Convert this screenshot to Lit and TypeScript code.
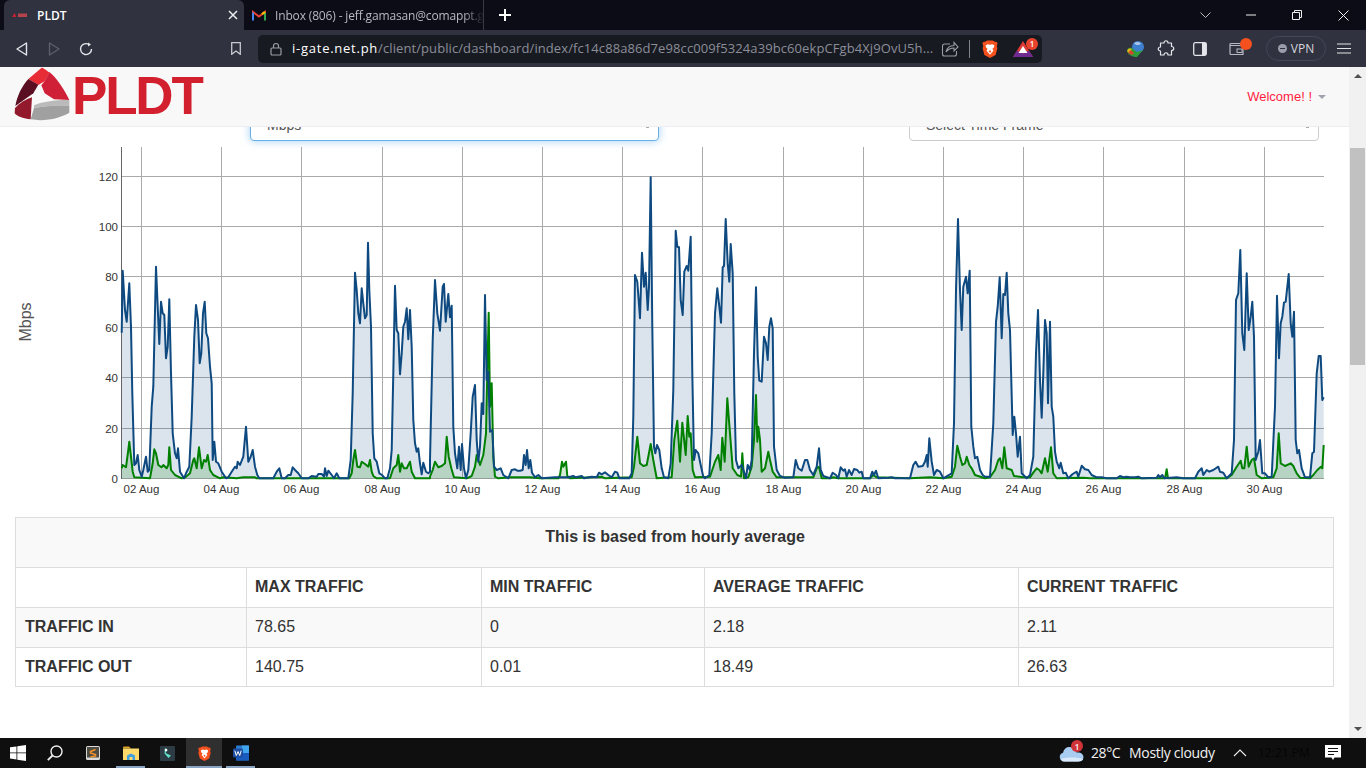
import { LitElement, html, css, svg } from "lit";
import { customElement } from "lit/decorators.js";

type Z = [number, number];
const conv = (ox: number, pts: number[]): Z[] => {
  const r: Z[] = [];
  for (let i = 0; i < pts.length; i += 2) r.push([ox + pts[i] / 3, 140 + pts[i + 1] / 3]);
  return r;
};
const blue: Z[] = [
  ...conv(100, [65,578,68,392,75,510,80,545,88,430,93,560,97,760,103,975,108,970,113,945,118,990,125,1010,130,990,138,950,143,995,148,990,155,800,160,740,168,380,173,500,178,612,183,485,188,520,193,525,198,655,203,620,208,478,213,700,218,880,225,940,230,955,234,925,240,995,246,1005,252,1015,258,1000,268,980,275,830,283,590,288,495,294,540,299,670,304,640,309,520,314,485,319,580,324,595,330,680,335,730,338,960,343,905,348,965,355,970,365,995,378,1015,385,1012,395,995,405,980,410,985,413,965,420,975,430,950,438,860,445,965,452,950,458,930,465,980,472,1005,478,1015,520,1015,530,995,538,985,545,1015,555,1015,565,1005,572,1005,578,982,585,990,595,1000,605,1015,625,1015,635,1008,650,1010,655,1002,665,1002,672,1010,675,985,680,1008,685,992,695,1005,702,1015,710,1000,718,1015,745,1015,752,960,758,760,765,398,770,450,775,520,780,550,785,445,790,490,795,535,800,525,804,308,808,450,813,560,818,880,823,955,830,965,838,1000,846,1005,855,1015,862,1015,870,985,875,930,880,700,885,437,890,570,895,580,900,703,905,640,910,560,915,545,920,505,925,598,930,510,935,620,940,840,945,910,950,935,955,925,960,970,965,1003,970,968,978,995,985,1000,990,995]),
  ...conv(430, [0,960,8,600,15,420,22,520,30,572,38,440,42,432,47,545,55,462,60,532,65,497,70,860,75,940,82,985,87,920,92,990,96,912,102,985,108,1015,115,990,122,880,128,770,135,735,140,900,145,965,150,920,155,790,160,822,165,465,170,720,175,695,180,875,187,870,192,980,200,990,212,985,220,1005,235,1015,245,990,255,988,262,992,270,992,278,990,282,945,287,975,291,930,296,985,301,960,306,998,315,1012,325,1005,335,1015,375,1012,415,1012,430,1008,437,1012,455,1008,462,1015,485,1010,500,1012,507,998,515,1003,525,997,535,1005,545,1012,555,995,562,998,568,1015,598,1015,605,1000,610,830,615,405,622,425,630,535,636,338,642,440,647,398,653,510,657,440,662,112,667,560,672,920,676,940,681,915,688,930,695,985,702,1012,715,1015,722,970,730,750,737,272,742,320,747,322,752,480,758,525,763,395,770,378,775,392,782,290,787,700,792,960,797,930,805,940,812,975,820,1010,825,1015,838,1005,845,880,855,520,862,445,868,500,873,548,878,382,882,378,887,237,893,370,898,425,902,312,908,400,913,760,918,960,925,985,935,975,942,995,948,1015,953,975,960,990,965,960,972,640,978,442,983,650,988,722,995,725,1002,590,1008,610,1013,660,1018,560,1023,535,1028,565,1032,920,1040,990,1050,1008,1065,1013,1090,1012,1097,960,1105,985,1115,992,1125,960,1132,960,1140,990,1150,1005,1160,980,1167,925,1172,990,1180,1008,1200,1015]),
  ...conv(830, [8,998,18,1005,25,1015,32,982,40,992,45,988,50,1010,57,990,65,1005,72,987,82,990,88,998,95,995,100,1015,120,1015,127,995,132,1005,138,992,145,1015,175,1013,185,1012,195,1015,240,1015,250,975,257,965,265,980,278,978,285,965,290,945,293,980,298,895,305,965,312,1005,320,990,330,995,340,1015,365,1000,372,850,378,450,384,237,390,450,395,570,400,440,408,410,413,460,419,392,424,860,430,920,435,955,442,950,450,990,458,1005,465,1010,480,1010,490,850,498,545,503,500,509,412,515,595,520,462,525,465,530,398,535,520,540,570,548,885,553,830,558,880,563,950,570,890,575,1000,590,1015,600,1005,610,950,618,640,624,510,630,720,635,833,640,700,645,540,650,580,654,790,660,545,665,800,670,830,675,935,680,965,688,985,692,968,700,1000,707,998,715,1015,728,1002,740,995,745,1010,755,977,765,988,775,990,785,1005,800,1012,815,1012,830,1015,860,1015,870,1008,880,1012,890,1010,900,1012,915,1012,925,1010,935,1015,980,1013,985,1005,990,1012,997,1005,1003,1015,1040,1012,1060,1015,1095,1015,1105,995,1115,985,1120,1005,1130,990,1138,995,1150,990,1165,980,1170,995,1180,998,1190,1015,1205,1000,1212,900,1218,480,1225,460,1231,330,1237,580,1243,630,1250,400,1256,570,1262,530,1267,485,1272,590,1277,960,1285,935,1290,900,1297,1000,1305,1000,1315,1012,1325,1010,1335,800,1341,467,1347,655,1352,550,1357,530,1362,488,1367,485,1376,402,1382,550,1387,590,1392,515,1397,900,1402,940,1407,930,1415,985,1425,1012,1440,1012,1447,940,1452,935,1460,700,1466,648,1472,648,1477,780,1481,772]),
];
const green: Z[] = [
  ...conv(100, [65,985,68,975,78,982,85,930,88,905,93,950,98,995,103,1012,150,1015,158,970,163,928,168,940,175,975,185,982,190,975,200,985,205,975,208,922,213,990,225,1005,245,1015,258,1010,270,1000,280,960,283,955,290,985,297,922,305,985,312,960,318,965,323,945,330,990,340,1005,360,1015,370,1012,410,1015,430,1012,465,1012,470,1015,748,1015,755,1000,760,960,765,930,772,980,780,982,785,965,795,972,805,980,810,960,815,995,820,1008,830,1015,870,1015,880,985,890,975,895,945,900,995,905,970,912,985,920,985,930,965,935,995,945,1015,990,1015]),
  ...conv(430, [0,1010,8,990,15,965,25,982,35,978,45,970,50,890,56,950,64,985,72,1012,110,1015,125,1008,135,980,140,945,150,975,160,945,168,880,172,700,176,518,180,800,185,730,190,950,195,1010,205,1015,240,1012,300,1012,330,1015,385,1015,390,1005,396,965,400,980,408,965,412,1008,420,1015,515,1010,525,1015,605,1012,612,980,622,890,630,970,640,978,650,975,662,912,670,960,680,1015,725,1012,733,900,742,842,750,965,757,848,767,945,773,828,778,890,782,880,788,990,795,1012,840,1010,855,965,865,945,872,990,877,893,884,965,892,775,900,880,908,985,922,1005,933,1010,937,940,942,1015,955,1012,965,980,972,900,978,765,982,905,985,860,990,900,995,995,1005,985,1015,935,1020,960,1028,995,1040,1012,1100,1012,1150,1012,1160,985,1167,980,1175,1015,1200,1015]),
  ...conv(830, [10,1012,25,1015,120,1015,130,1005,140,1012,240,1015,300,1012,340,1015,365,1010,375,980,382,917,390,950,397,975,405,970,410,950,418,975,425,985,435,1005,465,1015,480,1012,495,990,505,960,510,955,517,985,523,922,530,985,545,990,552,1008,580,1012,600,1012,612,995,620,985,628,990,635,1000,645,955,653,995,663,922,670,1000,680,1015,760,1013,780,1015,1005,1015,1010,988,1014,1015,1190,1015,1205,1005,1220,980,1232,962,1237,985,1243,985,1250,920,1256,980,1265,960,1272,955,1280,1005,1295,1015,1330,1012,1340,985,1346,880,1352,970,1365,978,1382,970,1390,978,1400,1000,1410,1013,1440,1015,1450,1005,1462,990,1473,980,1477,985,1481,915]),
];
const P = (a: Z[]) => a.map(([x, y]) => `${x.toFixed(1)},${y.toFixed(1)}`).join(" ");
const area = (a: Z[]) => `${a[0][0].toFixed(1)},478.5 ${P(a)} ${a[a.length - 1][0].toFixed(1)},478.5`;

const vGrid = [141, 221, 301, 382, 462, 542, 622, 702, 783, 863, 943, 1023, 1103, 1184, 1264];
const dates = ["02", "04", "06", "08", "10", "12", "14", "16", "18", "20", "22", "24", "26", "28", "30"];
const hGrid: [number, string][] = [[176, "120"], [226, "100"], [276, "80"], [327, "60"], [377, "40"], [428, "20"], [478, "0"]];

const brave = (s: number) => html`<svg width=${s} height=${s} viewBox="0 0 18 20"><path d="M3.5 2 6 .6h6L14.5 2l2 .2.9 1.3-.9 3.2.7 2.6-2 7.4L9 20l-6.2-3.3-2-7.4.7-2.6L.6 3.5l.9-1.3z" fill="#f4511e"/><path d="M4 6l2.4-1.4L9 5.300l2.600-.7L14 6l-1 3-1.400.8L12.800 12 9 16.500 5.200 12l1.200-2.200L5 9z" fill="#fff"/><path d="M7.500 12.500 9 11.500l1.500 1L9 14.500z" fill="#f4511e"/></svg>`;

@customElement("app-root")
export class AppRoot extends LitElement {
  static styles = css`
    :host { display: block; width: 1366px; height: 768px; overflow: hidden; font-family: "Liberation Sans", Arial, sans-serif; background: #fff; }
    svg { display: block; flex: none; }
    .tabs { height: 30px; background: #0c0c17; display: flex; padding-left: 4px; color: #fff; font-family: "Open Sans", sans-serif; font-size: 12px; }
    .tab { width: 240px; height: 30px; display: flex; align-items: center; box-sizing: border-box; }
    .tab.on { background: #30323f; border-radius: 6px 6px 0 0; padding-left: 8px; font-weight: 600; }
    .tab.on .t { margin-left: 9px; flex: 1; }
    .tab.on svg:last-child { margin-right: 6px; }
    .tab.off { border-right: 1px solid #3a3a46; padding-left: 8px; color: #b6b8c2; }
    .tab.off .t { margin-left: 9px; white-space: nowrap; letter-spacing: -0.15px; -webkit-mask-image: linear-gradient(90deg, #000 90%, transparent); mask-image: linear-gradient(90deg, #000 90%, transparent); }
    .plus { margin: 9px 0 0 15px; }
    .win { margin-left: auto; display: flex; }
    .win div { width: 46px; height: 30px; display: flex; align-items: center; justify-content: center; }

    .bar { height: 37px; background: #30323f; display: flex; align-items: center; }
    .nav { width: 258px; display: flex; align-items: center; padding-left: 6px; box-sizing: border-box; }
    .nb { width: 32px; display: flex; justify-content: center; }
    .mark { margin-left: auto; margin-right: 17px; }
    .url { width: 784px; height: 28px; background: #181a21; border-radius: 5px; display: flex; align-items: center; padding: 0 9px 0 11px; box-sizing: border-box; }
    .addr { margin-left: 9px; flex: 1; min-width: 0; font: 13px/26px "Open Sans", sans-serif; height: 28px; color: #8b8e99; white-space: nowrap; overflow: hidden; letter-spacing: 0.09px; }
    .addr b { font-weight: 400; color: #fff; letter-spacing: 0.75px; }
    .sep { width: 1px; height: 18px; background: #80828c; margin: 0 11px 0 10px; }
    .bat { margin-left: 14px; position: relative; }
    .badge { position: absolute; background: #e8432d; color: #fff; border-radius: 50%; display: flex; align-items: center; justify-content: center; font: 600 8px "Open Sans", sans-serif; }
    .bat .badge { width: 12px; height: 12px; right: -5px; top: -3px; }
    .m1 { margin-left: 84px; } .m2 { margin-left: 11px; } .m3 { margin-left: 18px; } .m4 { margin-left: 22px; position: relative; }
    .dot { position: absolute; width: 12px; height: 12px; border-radius: 50%; background: #f4511e; right: -7px; top: -4px; }
    .vpn { margin-left: 21px; width: 60px; height: 25px; box-sizing: border-box; border: 1px solid #44465a; border-radius: 13px; display: flex; align-items: center; justify-content: center; gap: 4px; color: #d5d6dc; font: 12px "Open Sans", sans-serif; }
    .vpn i { width: 9px; height: 9px; border-radius: 50%; background: #9a9cab; position: relative; display: block; }
    .vpn i::after { content: ""; position: absolute; left: 2px; right: 2px; top: 4px; height: 1px; background: #30323f; }
    .burger { margin-left: 11px; }

    .body { height: 671px; display: flex; }
    .page { width: 1349px; display: flex; flex-direction: column; overflow: hidden; }
    .navbar { height: 60px; flex: none; box-sizing: border-box; background: #f8f8f8; border-bottom: 1px solid #eeeef2; display: flex; align-items: flex-start; padding: 0 23px 0 10px; position: relative; z-index: 2; }
    .navbar svg.logo { margin-right: -8px; }
    .brand { font: 700 53px/57px "Liberation Sans", sans-serif; letter-spacing: -2.2px; color: #d3202f; }
    .welcome { margin: 22px 0 0 auto; font-size: 13px; line-height: 16px; color: #ff1d3e; }
    .caret { margin: 28px 0 0 6px; width: 0; height: 0; border-left: 4px solid transparent; border-right: 4px solid transparent; border-top: 4px solid #9fa3ad; }
    .selects { height: 34px; margin-top: -20px; flex: none; display: flex; padding-left: 250px; gap: 250px; }
    .sel { width: 409px; box-sizing: border-box; border: 1px solid #ccc; border-radius: 4px; background: #fff; font-size: 14px; line-height: 34px; padding-left: 16px; color: #555; position: relative; }
    .sel::after { content: ""; position: absolute; right: 9px; bottom: 12px; width: 3px; height: 1px; background: #aaa; }
    .sel.f { border-color: #66afe9; box-shadow: 0 0 8px rgba(102, 175, 233, .6); }
    .sel.w { width: 410px; }
    .chart { flex: none; }
    .chart text { font-family: "Liberation Sans", sans-serif; fill: #333; }
    table { margin-left: 15px; width: 1319px; border-collapse: collapse; table-layout: fixed; font-size: 16px; color: #333; flex: none; }
    td, th { border: 1px solid #ddd; padding: 0 8px; height: 40px; box-sizing: border-box; text-align: left; font-weight: 400; }
    td:first-child, th:first-child { padding-left: 9px; }
    th, .h { font-weight: 700; }
    .title td { height: 50px; background: #f9f9f9; text-align: center; font-weight: 700; vertical-align: top; padding: 9px 0 0 1px; line-height: 20px; }
    .up2 th, .up2 td { padding-bottom: 2px; }
    .odd td { background: #f9f9f9; }
    .last td { height: 39px; }

    .sb { width: 17px; background: #f1f1f1; position: relative; flex: none; display: flex; flex-direction: column; align-items: center; }
    .up { margin-top: 7px; width: 0; height: 0; border-left: 4px solid transparent; border-right: 4px solid transparent; border-bottom: 4px solid #505050; }
    .thumb { margin-top: 70px; width: 15px; height: 217px; background: #c1c1c1; }
    .down { margin-top: auto; margin-bottom: 7px; width: 0; height: 0; border-left: 4px solid transparent; border-right: 4px solid transparent; border-top: 4px solid #505050; }

    .task { height: 30px; background: #0f0f0f; display: flex; align-items: stretch; color: #f2f2f2; font: 14px "Open Sans", sans-serif; }
    .ti { display: flex; align-items: center; justify-content: center; box-sizing: border-box; position: relative; }
    .ti.u::after { content: ""; position: absolute; bottom: 0; height: 2px; left: 4px; right: 4px; background: #8aa4c4; }
    .ti.on { background: #2f2f2f; }
    .ti.on::after { left: 0; right: 0; }
    .w36 { width: 36px; } .w37 { width: 37px; } .w38 { width: 38px; }
    .tray { margin-left: auto; display: flex; align-items: center; padding-right: 25px; }
    .tray span { margin-bottom: 2px; }
    .cloud { position: relative; width: 26px; }
    .cloud .badge { width: 12px; height: 12px; left: 12px; top: -4px; background: #d13438; }
    .temp { margin-left: 6px; width: 38px; letter-spacing: -0.4px; }
    .cond { width: 101px; white-space: nowrap; letter-spacing: -0.3px; }
    .clock { margin-left: 8px; width: 55px; color: #050505; font-size: 12px; white-space: nowrap; }
    .note { margin-left: 12px; }
  `;

  render() {
    return html`
      <div class="tabs">
        <div class="tab on">
          <svg width="16" height="8" viewBox="0 0 16 8"><path d="M0 6l2.500-4 2 4z" fill="#c9202f"/><rect x="6" y="2.500" width="9" height="3.500" fill="#b4434e"/></svg>
          <span class="t">PLDT</span>
          <svg width="10" height="10" viewBox="0 0 10 10"><path d="M1 1l8 8M9 1 1 9" stroke="#eee" stroke-width="1.500"/></svg>
        </div>
        <div class="tab off">
          <svg width="14" height="11" viewBox="0 0 14 11"><path d="M1 10V2l6 4.500L13 2v8" fill="none" stroke="#ea4335" stroke-width="2"/><path d="M1 10.500V2.500" stroke="#4285f4" stroke-width="2"/><path d="M13 10.500V2.500" stroke="#34a853" stroke-width="2"/><path d="M10 4.200 13 2" stroke="#fbbc04" stroke-width="2.200"/></svg>
          <span class="t">Inbox (806) - jeff.gamasan@comappt.g</span>
        </div>
        <svg class="plus" width="12" height="12" viewBox="0 0 12 12"><path d="M6 0v12M0 6h12" stroke="#fff" stroke-width="2"/></svg>
        <div class="win">
          <div><svg width="11" height="6" viewBox="0 0 11 6"><path d="M.5.500l5 5 5-5" fill="none" stroke="#bbb"/></svg></div>
          <div><svg width="10" height="2" viewBox="0 0 10 2"><path d="M0 1h10" stroke="#eee"/></svg></div>
          <div><svg width="10" height="10" viewBox="0 0 10 10"><path d="M.5 2.500h7v7h-7zM2.500 2.500v-2h7v7h-2" fill="none" stroke="#eee"/></svg></div>
          <div><svg width="11" height="11" viewBox="0 0 11 11"><path d="M.5.500l10 10M10.500.500l-10 10" stroke="#eee"/></svg></div>
        </div>
      </div>

      <div class="bar">
        <div class="nav">
          <div class="nb"><svg width="12" height="14" viewBox="0 0 12 14"><path d="M1 7l9.500-6v12z" fill="none" stroke="#e4e5ea" stroke-width="1.400" stroke-linejoin="round"/></svg></div>
          <div class="nb"><svg width="12" height="14" viewBox="0 0 12 14"><path d="M11 7 1.500 1v12z" fill="none" stroke="#5c5e6b" stroke-width="1.400" stroke-linejoin="round"/></svg></div>
          <div class="nb"><svg width="14" height="14" viewBox="0 0 14 14"><path d="M12.500 7A5.500 5.500 0 1 1 10 2.500" fill="none" stroke="#e4e5ea" stroke-width="1.400"/><path d="M9 .5l3 2-3 2z" fill="#e4e5ea"/></svg></div>
          <svg class="mark" width="10" height="13" viewBox="0 0 10 13"><path d="M.7.700h8.600v11.600L5 9 .7 12.300z" fill="none" stroke="#c8c9d0" stroke-width="1.300"/></svg>
        </div>
        <div class="url">
          <svg width="14" height="14" viewBox="0 0 14 14"><rect x="2" y="6" width="10" height="7" rx="1" fill="none" stroke="#9a9ca6" stroke-width="1.200"/><path d="M4.500 6V4a2.500 2.500 0 0 1 5 0v2" fill="none" stroke="#9a9ca6" stroke-width="1.200"/></svg>
          <div class="addr"><b>i-gate.net.ph</b>/client/public/dashboard/index/fc14c88a86d7e98cc009f5324a39bc60ekpCFgb4Xj9OvU5h...</div>
          <svg width="18" height="16" viewBox="0 0 18 16"><path d="M9 3H3.500A2 2 0 0 0 1.500 5v8a2 2 0 0 0 2 2h10a2 2 0 0 0 2-2v-3" fill="none" stroke="#9a9ca6" stroke-width="1.100"/><path d="M5 11c1-4 4-6.500 8-6.500V1.500l4 4.500-4 4V7c-3.500 0-6 1.500-8 4z" fill="none" stroke="#9a9ca6" stroke-width="1.100"/></svg>
          <div class="sep"></div>
          ${brave(18)}
          <div class="bat">
            <svg width="20" height="16" viewBox="0 0 20 16"><path d="M10 0 20 16H0z" fill="#e03a35"/><path d="M0 16 4 9.500l6 3 6-3 4 6.500z" fill="#6f2a92"/><path d="M10 5l4.500 7h-9z" fill="#fff"/></svg>
            <span class="badge">1</span>
          </div>
        </div>
        <svg class="m1" width="20" height="18" viewBox="0 0 20 18"><circle cx="12" cy="7" r="6" fill="#3f7fd0"/><path d="M8 3c3-2 6-1 7 1-2 1-5 2-7-1z" fill="#a9c8ec"/><path d="M1 11c0-3 3-4 5-3l5 4 6-2-6 7c-4 0-9-2-10-6z" fill="#2e9e3a"/><path d="M1 11c1-3 3-3 5-2L3 13z" fill="#e2b012"/><path d="M2 13l3-3 3 3-2 2z" fill="#d8442c"/></svg>
        <svg class="m2" width="18" height="18" viewBox="0 0 18 18"><path d="M7 3c0-3 4-3 4 0h3.500v3.500c3 0 3 4 0 4V15H11c0-3-4-3-4 0H3.500v-4c-3 0-3-4 0-4V3z" fill="none" stroke="#e4e5ea" stroke-width="1.200" stroke-linejoin="round"/></svg>
        <svg class="m3" width="14" height="14" viewBox="0 0 14 14"><rect x=".7" y=".7" width="12.600" height="12.600" rx="1.500" fill="none" stroke="#e4e5ea" stroke-width="1.300"/><rect x="9" y="1" width="4" height="12" fill="#e4e5ea"/></svg>
        <div class="m4">
          <svg width="16" height="14" viewBox="0 0 16 14"><path d="M1 3.500h14M1 2.500a1 1 0 0 1 1-1h12v11H2a1 1 0 0 1-1-1z" fill="none" stroke="#b7b9c2" stroke-width="1.200"/><rect x="8" y="7" width="5" height="3.500" fill="none" stroke="#b7b9c2"/></svg>
          <span class="dot"></span>
        </div>
        <div class="vpn"><i></i><span>VPN</span></div>
        <svg class="burger" width="14" height="11" viewBox="0 0 14 11"><path d="M0 1h14M0 5.500h14M0 10h14" stroke="#e4e5ea" stroke-width="1.200"/></svg>
      </div>

      <div class="body">
        <div class="page">
          <div class="navbar">
            <svg class="logo" width="70" height="58" viewBox="0 3 70 58">
              <g transform="scale(.3333)">
                <path d="M55 45 95 11c5 0 14 8 23 14l-13 26-20 12z" fill="#e82c36"/>
                <path d="M118 24c20 15 47 55 60 84l-46-2-28-18-10-24 11-14z" fill="#cf2038"/>
                <path d="M55 45 85 62 70 88 16 126c5-30 20-60 39-81z" fill="#5a0e22"/>
                <path d="M15 132C30 116 48 106 66 100L62 166C42 164 22 158 14 148z" fill="#93192d"/>
                <path d="M72 124c20-10 60-16 106-16v18C140 122 105 128 72 132z" fill="#b9bab9"/>
                <path d="M72 132c33-4 68-10 106-6v20c-25 15-70 28-116 20z" fill="#a0a0a0"/>
              </g>
            </svg>
            <span class="brand">PLDT</span>
            <span class="welcome">Welcome! !</span>
            <span class="caret"></span>
          </div>
          <div class="selects">
            <div class="sel f">Mbps</div>
            <div class="sel w">Select Time Frame</div>
          </div>
          <svg class="chart" width="1349" height="376" viewBox="0 141 1349 376">
            ${vGrid.map((x, i) => svg`
              <line x1=${x + 0.5} x2=${x + 0.5} y1="147" y2="479" stroke="#aaa"/>
              <text x=${x + 0.5} y="493" font-size="11.500" text-anchor="middle">${dates[i]} Aug</text>`)}
            ${hGrid.map(([y, t]) => svg`
              <line x1="122" x2="1324" y1=${y + 0.5} y2=${y + 0.5} stroke="#aaa"/>
              <text x="118" y=${y + 4.5} font-size="11.500" text-anchor="end">${t}</text>`)}
            <line x1="121.500" x2="121.500" y1="147" y2="479" stroke="#666"/>
            <text transform="translate(30.500 322) rotate(-90)" font-size="16" text-anchor="middle" style="fill:#555">Mbps</text>
            <polygon points=${area(blue)} fill="#0e4a80" fill-opacity=".15"/>
            <polygon points=${area(green)} fill="#008000" fill-opacity=".17"/>
            <polyline points=${P(green)} fill="none" stroke="#008000" stroke-width="2" stroke-linejoin="round"/>
            <polyline points=${P(blue)} fill="none" stroke="#0e4a80" stroke-width="2" stroke-linejoin="round"/>
          </svg>
          <table>
            <colgroup><col style="width:231px"/><col style="width:235px"/><col style="width:223px"/><col style="width:314px"/><col style="width:315px"/></colgroup>
            <tr class="title"><td colspan="5">This is based from hourly average</td></tr>
            <tr class="up2"><th></th><th>MAX TRAFFIC</th><th>MIN TRAFFIC</th><th>AVERAGE TRAFFIC</th><th>CURRENT TRAFFIC</th></tr>
            <tr class="odd up2"><td class="h">TRAFFIC IN</td><td>78.65</td><td>0</td><td>2.18</td><td>2.11</td></tr>
            <tr class="last"><td class="h">TRAFFIC OUT</td><td>140.75</td><td>0.01</td><td>18.49</td><td>26.63</td></tr>
          </table>
        </div>
        <div class="sb"><div class="up"></div><div class="thumb"></div><div class="down"></div></div>
      </div>

      <div class="task">
        <div class="ti w36"><svg width="16" height="16" viewBox="0 0 16 16"><path d="M0 2.300 6.500 1.400v6.100H0zM7.300 1.300 16 0v7.500H7.300zM0 8.300h6.500v6.200L0 13.600zM7.300 8.300H16V16l-8.700-1.300z" fill="#fff"/></svg></div>
        <div class="ti w38"><svg width="16" height="16" viewBox="0 0 16 16"><circle cx="9.500" cy="6.500" r="5.500" fill="none" stroke="#eee" stroke-width="1.400"/><path d="M5.500 10.500 .8 15.200" stroke="#eee" stroke-width="1.800"/></svg></div>
        <div class="ti w38"><svg width="14" height="14" viewBox="0 0 14 14"><rect width="14" height="14" rx="1.500" fill="#d9d9d9"/><rect x="1" y="1" width="12" height="10.500" fill="#4d4a42"/><path d="M9.500 3.500 4.500 5.500v1.500l5 1.500v1.500l-5 1" fill="none" stroke="#f5932a" stroke-width="1.500"/></svg></div>
        <div class="ti w37 u"><svg width="16" height="14" viewBox="0 0 16 14"><path d="M0 1.500A1 1 0 0 1 1 .5h5l2 2H0z" fill="#d9a426"/><rect y="2.500" width="16" height="11.500" fill="#fbd96b"/><path d="M4 14V9.500L8 7.500l4 2V14H9.500v-3h-3v3z" fill="#3f9ee0"/></svg></div>
        <div class="ti w37"><svg width="15" height="15" viewBox="0 0 15 15"><rect width="15" height="15" rx="1" fill="#2d3b44"/><path d="M5 2l2.500 2-2 3L11 9.500 8.500 12 4.500 7.500z" fill="#5de0c8"/><circle cx="6" cy="4" r="1.300" fill="#fff"/></svg></div>
        <div class="ti w36 u on">${brave(15)}</div>
        <div class="ti w37 u"><svg width="16" height="16" viewBox="0 0 16 15"><rect x="3" width="13" height="15" rx="1" fill="#2b7cd3"/><rect x="3" y="7.500" width="13" height="7.500" fill="#185abd"/><rect x="9" width="7" height="7.500" fill="#41a5ee"/><rect y="3" width="10" height="9" rx="1" fill="#1e4ea1"/><path d="M1.800 5.200 3.300 10l1.700-4 1.700 4 1.500-4.800" fill="none" stroke="#fff"/></svg></div>
        <div class="tray">
          <div class="cloud">
            <svg width="26" height="18" viewBox="0 0 26 18"><path d="M5 17.500a4.500 4.500 0 0 1-1-8.800C5 4 9 2 12.500 3.500c3 .8 4.500 3 5 5 4-.6 7 1.500 7 4.500s-2 4.500-5 4.500z" fill="#a9cdf0"/><path d="M2 15c5-2 16-2 22 0-1 1.800-3 2.500-5 2.500H5c-1.500 0-2.500-1-3-2.500z" fill="#dbeafa"/></svg>
            <span class="badge">1</span>
          </div>
          <span class="temp">28°C</span>
          <span class="cond">Mostly cloudy</span>
          <svg width="20" height="8" viewBox="0 0 20 8"><path d="M4 7l6-6 6 6" fill="none" stroke="#eee" stroke-width="1.100"/></svg>
          <span class="clock">12:21 PM</span>
          <svg class="note" width="16" height="16" viewBox="0 0 16 16"><path d="M0 0h16v12.500H9.500L8 15 6.500 12.500H0z" fill="#fff"/><path d="M3 3.500h10M3 6.500h10M3 9.500h6" stroke="#111"/></svg>
        </div>
      </div>
    `;
  }
}
